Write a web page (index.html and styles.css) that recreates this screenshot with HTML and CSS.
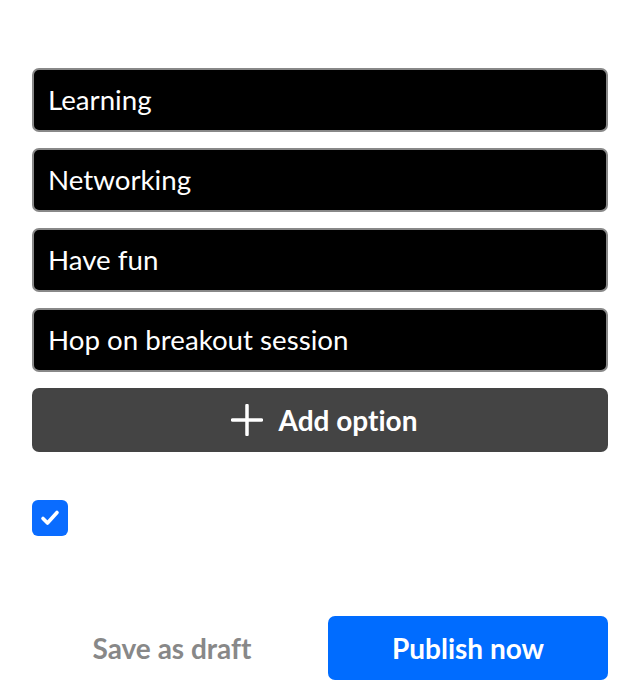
FILE: index.html
```html
<!DOCTYPE html>
<html>
<head>
<meta charset="utf-8">
<link rel="stylesheet" href="styles.css">
</head>
<body>
<div class="page">
  <div class="options">
    <div class="option">Learning</div>
    <div class="option">Networking</div>
    <div class="option">Have fun</div>
    <div class="option">Hop on breakout session</div>
    <button class="add">
      <svg width="32" height="32" viewBox="0 0 32 32"><path d="M16 1.5v29M1.5 16h29" stroke="#fff" stroke-width="3.5" stroke-linecap="round"/></svg>
      <span>Add option</span>
    </button>
  </div>
  <div class="check">
    <svg width="36" height="36" viewBox="0 0 36 36"><path d="M11 18.5l4.5 4.5 9.5-10.5" fill="none" stroke="#fff" stroke-width="3.6" stroke-linecap="round" stroke-linejoin="round"/></svg>
  </div>
  <div class="footer">
    <button class="draft">Save as draft</button>
    <button class="publish">Publish now</button>
  </div>
</div>
</body>
</html>
```
FILE: styles.css
```css
html, body { margin: 0; padding: 0; background: #fff; }
body { font-family: Lato, "Liberation Sans", sans-serif; font-variant-ligatures: none; }
.page { padding: 68px 32px 0 32px; }
.options { display: flex; flex-direction: column; gap: 16px; }
.option {
  height: 64px; box-sizing: border-box;
  background: #000; color: #fff;
  border: 2px solid #888; border-radius: 7px;
  padding: 0 14px 2px 14px; display: flex; align-items: center;
  font-size: 27.7px;
}
.add {
  height: 64px; border: none; border-radius: 7px; background: #444;
  color: #fff; font-family: inherit; font-weight: bold; font-size: 28px;
  font-variant-ligatures: none;
  display: flex; align-items: center; justify-content: center; gap: 16px;
  padding: 0 0 0 8px; margin: 0;
}
.add svg { display: block; }
.check {
  margin-top: 48px; width: 36px; height: 36px; border-radius: 6px;
  background: #0a6cff; display: flex; align-items: center; justify-content: center;
}
.check svg { display: block; }
.footer {
  margin-top: 80px; display: grid; grid-template-columns: 1fr 1fr; gap: 16px;
}
.footer button {
  height: 64px; border: none; border-radius: 7px; font-family: inherit;
  font-variant-ligatures: none;
  font-weight: bold; font-size: 28px; padding: 0; margin: 0;
}
.draft { background: transparent; color: #888; }
.publish { background: #006cff; color: #fff; }
```
